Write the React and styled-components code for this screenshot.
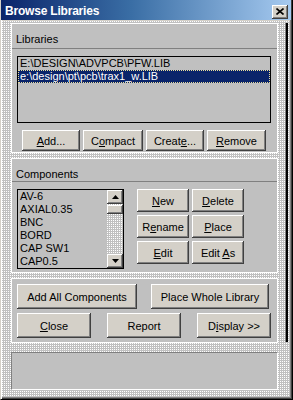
import React from 'react';
import styled, { createGlobalStyle } from 'styled-components';

const GlobalStyle = createGlobalStyle`
  html, body {
    margin: 0;
    padding: 0;
    background: #c0c0c0;
  }
  body {
    font-family: "Liberation Sans", Arial, sans-serif;
    font-size: 11px;
  }
`;

const dither = `
  background-color: #c0c0c0;
  background-image: conic-gradient(at 1px 1px, #c0c0c0 0 270deg, #ffffff 270deg 360deg);
  background-size: 2px 2px;
`;

const Window = styled.div`
  width: 293px;
  height: 400px;
  box-sizing: border-box;
  display: flex;
  flex-direction: column;
  background: #d4d0c8;
  border-left: 1px solid #d4d0c8;
  border-right: 1px solid #000;
  border-bottom: 1px solid #000;
  box-shadow: inset 1px 0 #fff, inset -1px -1px #404040, inset -2px -2px #808080;
`;

const TitleBar = styled.div`
  height: 20px;
  margin: 0 1px 0 0;
  display: flex;
  align-items: center;
  justify-content: space-between;
  padding: 0 3px 0 4px;
  background: linear-gradient(90deg, #0a246a 0%, #3a6ea5 45%, #a6caf0 100%);
`;

const Title = styled.span`
  color: #fff;
  font-weight: bold;
  font-size: 12px;
  letter-spacing: -0.2px;
  padding-top: 1px;
`;

const CloseButton = styled.div`
  width: 16px;
  height: 14px;
  margin-top: 3px;
  background: #d4d0c8;
  box-shadow: inset -1px -1px #404040, inset 1px 1px #fff, inset -2px -2px #808080;
  display: flex;
  align-items: center;
  justify-content: center;
`;

const Body = styled.div`
  flex: 1;
  display: flex;
  margin: 1px 2px 2px 1px;
  padding: 2px 2px 0 9px;
  ${dither}
`;

const Column = styled.div`
  width: 267px;
  display: flex;
  flex-direction: column;
  gap: 5px;
`;

const RightEdge = styled.div`
  width: 2px;
  height: 319px;
  margin-left: 8px;
  background: #000;
  box-shadow: -1px 0 #808080;
`;

const Panel = styled.div`
  height: ${(p) => p.$h}px;
  box-sizing: border-box;
  background: #c0c0c0;
  border: 1px solid #fff;
  display: flex;
  flex-direction: column;
`;

const StatusPanel = styled.div`
  height: 38px;
  margin-top: 4px;
  box-sizing: border-box;
  background: #c0c0c0;
  border-top: 1px solid #808080;
  border-left: 1px solid #808080;
  border-right: 1px solid #fff;
  border-bottom: 1px solid #fff;
`;

const PanelHeader = styled.div`
  height: ${(p) => p.$h}px;
  box-sizing: border-box;
  border-bottom: 1px solid #808080;
  padding: ${(p) => p.$pt}px 0 0 4px;
  color: #000;
  flex-shrink: 0;
`;

const PanelBody = styled.div`
  padding: ${(p) => p.$pad};
  display: flex;
  flex-direction: ${(p) => p.$dir || 'column'};
  gap: ${(p) => p.$gap || 0}px;
`;

const ListBox = styled.div`
  width: ${(p) => p.$w}px;
  height: ${(p) => p.$h}px;
  box-sizing: border-box;
  border: 1px solid #000;
  background: #c0c0c0;
  display: flex;
  overflow: hidden;
`;

const Items = styled.div`
  flex: 1;
  display: flex;
  flex-direction: column;
`;

const Item = styled.div`
  height: 13px;
  line-height: 13px;
  padding-left: 2px;
  color: ${(p) => (p.$selected ? '#fff' : '#000')};
  background: ${(p) => (p.$selected ? '#0a246a' : 'transparent')};
  outline: ${(p) => (p.$selected ? '1px dotted #e8dc9a' : 'none')};
  outline-offset: -1px;
  white-space: nowrap;
`;

const ScrollBar = styled.div`
  width: 16px;
  display: flex;
  flex-direction: column;
  ${dither}
`;

const ScrollButton = styled.div`
  width: 16px;
  height: ${(p) => p.$h || 14}px;
  margin-top: ${(p) => p.$mt || 0}px;
  box-sizing: border-box;
  background: #d4d0c8;
  box-shadow: inset -1px -1px #404040, inset 1px 1px #fff, inset -2px -2px #808080;
  display: flex;
  align-items: center;
  justify-content: center;
  flex-shrink: 0;
`;

const Track = styled.div`
  flex: 1;
`;

const Row = styled.div`
  display: flex;
  gap: ${(p) => p.$gap}px;
  padding-left: ${(p) => p.$pl || 0}px;
`;

const ButtonGrid = styled.div`
  display: grid;
  grid-template-columns: 52px 52px;
  grid-auto-rows: 23px;
  column-gap: 3px;
  row-gap: 3px;
`;

const Button = styled.div`
  width: ${(p) => (p.$fill ? 'auto' : `${p.$w}px`)};
  height: ${(p) => (p.$fill ? 'auto' : `${p.$h || 21}px`)};
  box-sizing: border-box;
  background: #d4d0c8;
  box-shadow: inset -1px -1px #404040, inset 1px 1px #fff, inset -2px -2px #808080;
  display: flex;
  align-items: center;
  justify-content: center;
  color: #000;
  white-space: nowrap;
`;

const Label = styled.span`
  white-space: pre;
`;

const U = styled.span`
  text-decoration: underline;
  text-underline-offset: 1px;
`;

const Arrow = ({ up }) => (
  <svg width="7" height="4" viewBox="0 0 7 4">
    <polygon points={up ? '3.5,0 7,4 0,4' : '0,0 7,0 3.5,4'} fill="#000" />
  </svg>
);

const components = ['AV-6', 'AXIAL0.35', 'BNC', 'BORD', 'CAP SW1', 'CAP0.5'];

export default function App() {
  return (
    <>
      <GlobalStyle />
      <Window>
        <TitleBar>
          <Title>Browse Libraries</Title>
          <CloseButton>
            <svg width="8" height="7" viewBox="0 0 8 7">
              <path d="M0.5 0.5 L7.5 6.5 M7.5 0.5 L0.5 6.5" stroke="#000" strokeWidth="1.6" />
            </svg>
          </CloseButton>
        </TitleBar>
        <Body>
          <Column>
            <Panel $h={130}>
              <PanelHeader $h={25} $pt={9}>Libraries</PanelHeader>
              <PanelBody $pad="7px 0 0 5px" $gap={7}>
                <ListBox $w={254} $h={67}>
                  <Items>
                    <Item>E:\DESIGN\ADVPCB\PFW.LIB</Item>
                    <Item $selected>e:\design\pt\pcb\trax1_w.LIB</Item>
                  </Items>
                </ListBox>
                <Row $gap={3} $pl={5}>
                  <Button $w={58}><Label><U>A</U>dd...</Label></Button>
                  <Button $w={60}><Label>C<U>o</U>mpact</Label></Button>
                  <Button $w={58}><Label>Creat<U>e</U>...</Label></Button>
                  <Button $w={59}><Label><U>R</U>emove</Label></Button>
                </Row>
              </PanelBody>
            </Panel>
            <Panel $h={115}>
              <PanelHeader $h={23} $pt={9}>Components</PanelHeader>
              <PanelBody $pad="7px 0 0 5px" $dir="row" $gap={13}>
                <ListBox $w={107} $h={80}>
                  <Items>
                    {components.map((c) => (
                      <Item key={c}>{c}</Item>
                    ))}
                  </Items>
                  <ScrollBar>
                    <ScrollButton><Arrow up /></ScrollButton>
                    <ScrollButton $h={9} $mt={1} />
                    <Track />
                    <ScrollButton><Arrow /></ScrollButton>
                  </ScrollBar>
                </ListBox>
                <ButtonGrid>
                  <Button $fill><Label><U>N</U>ew</Label></Button>
                  <Button $fill><Label><U>D</U>elete</Label></Button>
                  <Button $fill><Label>R<U>e</U>name</Label></Button>
                  <Button $fill><Label><U>P</U>lace</Label></Button>
                  <Button $fill><Label><U>E</U>dit</Label></Button>
                  <Button $fill><Label>Edit <U>A</U>s</Label></Button>
                </ButtonGrid>
              </PanelBody>
            </Panel>
            <Panel $h={65}>
              <PanelBody $pad="5px 0 0 5px" $gap={4}>
                <Row $gap={14}>
                  <Button $w={120} $h={25}>Add All Components</Button>
                  <Button $w={118} $h={25}>Place Whole Library</Button>
                </Row>
                <Row $gap={16}>
                  <Button $w={74} $h={25}><Label><U>C</U>lose</Label></Button>
                  <Button $w={74} $h={25}>Report</Button>
                  <Button $w={74} $h={25}><Label>D<U>i</U>splay &gt;&gt;</Label></Button>
                </Row>
              </PanelBody>
            </Panel>
            <StatusPanel />
          </Column>
          <RightEdge />
        </Body>
      </Window>
    </>
  );
}
